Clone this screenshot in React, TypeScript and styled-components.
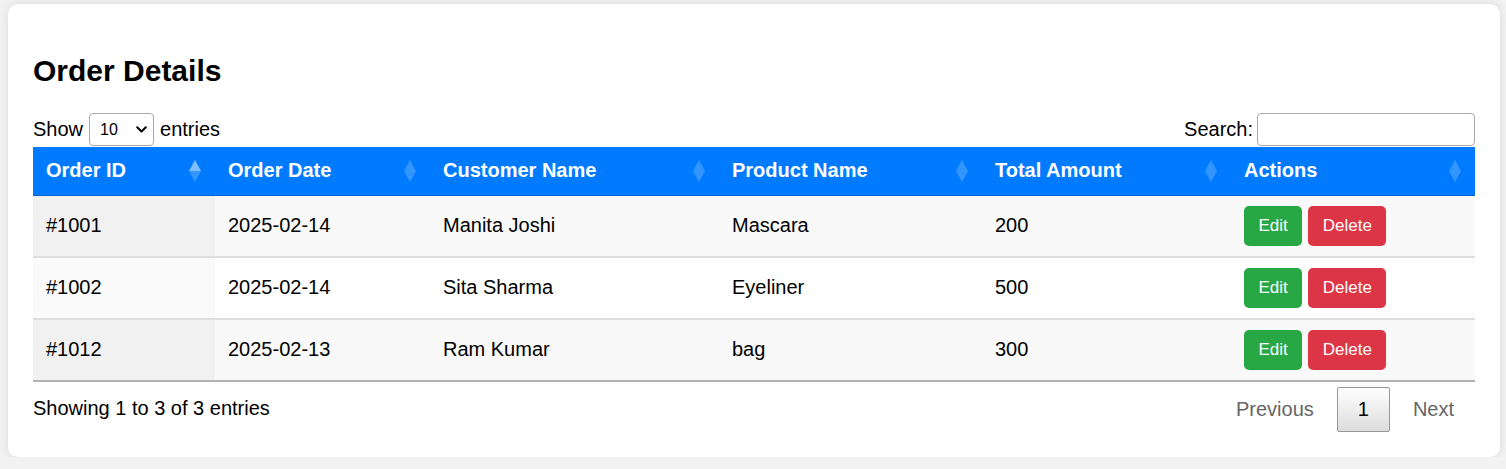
import React from "react";
import styled, { createGlobalStyle, css } from "styled-components";

const GlobalStyle = createGlobalStyle`
  html, body {
    margin: 0;
    padding: 0;
    background: #f2f2f2;
  }
  body {
    padding: 4px 6px 0 8px;
    font-family: "Liberation Sans", Arial, sans-serif;
    font-size: 20px;
    color: #000;
  }
`;

interface Order {
  id: string;
  date: string;
  customer: string;
  product: string;
  amount: number;
}

const orders: Order[] = [
  { id: "#1001", date: "2025-02-14", customer: "Manita Joshi", product: "Mascara", amount: 200 },
  { id: "#1002", date: "2025-02-14", customer: "Sita Sharma", product: "Eyeliner", amount: 500 },
  { id: "#1012", date: "2025-02-13", customer: "Ram Kumar", product: "bag", amount: 300 },
];

const columns = [
  { label: "Order ID", width: 182 },
  { label: "Order Date", width: 215 },
  { label: "Customer Name", width: 289 },
  { label: "Product Name", width: 263 },
  { label: "Total Amount", width: 249 },
  { label: "Actions", width: 244 },
];

export default function App() {
  return (
    <>
      <GlobalStyle />
      <Card>
        <Title>Order Details</Title>

        <Toolbar>
          <Length>
            Show
            <SelectWrap>
              <Select defaultValue="10">
                <option value="10">10</option>
                <option value="25">25</option>
                <option value="50">50</option>
                <option value="100">100</option>
              </Select>
              <Chevron width="11" height="7" viewBox="0 0 11 7">
                <path d="M1.2 1.2l4.3 4.3 4.3-4.3" fill="none" stroke="#000" strokeWidth="2" strokeLinecap="round" strokeLinejoin="round" />
              </Chevron>
            </SelectWrap>
            entries
          </Length>
          <SearchLabel>
            Search:<SearchInput type="search" />
          </SearchLabel>
        </Toolbar>

        <Table>
          <colgroup>
            {columns.map((c) => (
              <col key={c.label} style={{ width: c.width }} />
            ))}
          </colgroup>
          <thead>
            <tr>
              {columns.map((c, i) => (
                <HeaderCell key={c.label} $active={i === 0}>
                  {c.label}
                </HeaderCell>
              ))}
            </tr>
          </thead>
          <tbody>
            {orders.map((o, index) => (
              <Row key={o.id} $odd={index % 2 === 0} $first={index === 0}>
                <Cell>{o.id}</Cell>
                <Cell>{o.date}</Cell>
                <Cell>{o.customer}</Cell>
                <Cell>{o.product}</Cell>
                <Cell>{o.amount}</Cell>
                <Cell>
                  <ActionButton $variant="edit">Edit</ActionButton>
                  <ActionButton $variant="delete">Delete</ActionButton>
                </Cell>
              </Row>
            ))}
          </tbody>
        </Table>

        <Footer>
          <Info>Showing 1 to 3 of 3 entries</Info>
          <Pagination>
            <PageButton $disabled>Previous</PageButton>
            <PageButton $current>1</PageButton>
            <PageButton $disabled>Next</PageButton>
          </Pagination>
        </Footer>
      </Card>
    </>
  );
}

const Card = styled.div`
  background: #fff;
  border-radius: 10px;
  box-shadow: 0 0 10px rgba(0, 0, 0, 0.1);
  padding: 25px;
`;

const Title = styled.h2`
  margin: 25px 0 25px;
  font-size: 30px;
  font-weight: bold;
  line-height: normal;
`;

const Toolbar = styled.div`
  display: flex;
  justify-content: space-between;
  align-items: flex-start;
  height: 34px;
`;

const Length = styled.label`
  display: flex;
  align-items: center;
  height: 33px;
`;

const SelectWrap = styled.span`
  position: relative;
  display: inline-block;
  height: 33px;
  margin: 0 6px;
`;

const Select = styled.select`
  appearance: none;
  width: 65px;
  height: 33px;
  box-sizing: border-box;
  padding: 0 0 0 10px;
  border: 1px solid #aaa;
  border-radius: 4px;
  background: #fff;
  font-family: "Liberation Sans", Arial, sans-serif;
  font-size: 16px;
  color: #000;
`;

const Chevron = styled.svg`
  position: absolute;
  right: 7px;
  top: 13px;
  pointer-events: none;
`;

const SearchLabel = styled.label`
  display: flex;
  align-items: center;
  height: 33px;
`;

const SearchInput = styled.input`
  width: 218px;
  height: 33px;
  box-sizing: border-box;
  margin-left: 4px;
  padding: 5px;
  border: 1px solid #aaa;
  border-radius: 4px;
  background: #fff;
  font-family: "Liberation Sans", Arial, sans-serif;
  font-size: 16px;
`;

const Table = styled.table`
  width: 100%;
  table-layout: fixed;
  border-collapse: collapse;
  border-bottom: 2px solid #b3b3b3;
`;

const triangle = css`
  content: "";
  position: absolute;
  right: 14px;
  width: 0;
  height: 0;
  border-left: 6px solid transparent;
  border-right: 6px solid transparent;
`;

const HeaderCell = styled.th<{ $active?: boolean }>`
  position: relative;
  height: 48px;
  box-sizing: border-box;
  padding: 12px 22px 12px 13px;
  background: #007bff;
  color: #fff;
  font-weight: bold;
  font-size: 20px;
  text-align: left;
  border-bottom: 1px solid #0062cc;

  &::before {
    ${triangle};
    top: 13px;
    border-bottom: 11px solid rgba(255, 255, 255, ${(p) => (p.$active ? 0.5 : 0.2)});
  }

  &::after {
    ${triangle};
    top: 24px;
    border-top: 11px solid rgba(255, 255, 255, 0.2);
  }
`;

const Row = styled.tr<{ $odd: boolean; $first: boolean }>`
  background: ${(p) => (p.$odd ? "#f9f9f9" : "#fff")};
  border-top: ${(p) => (p.$first ? "none" : "2px solid #ddd")};

  td:first-child {
    background: ${(p) => (p.$odd ? "#f1f1f1" : "#fafafa")};
  }
`;

const Cell = styled.td`
  height: 40px;
  padding: 10px 12px 10px 13px;
  font-size: 20px;
  vertical-align: middle;
  white-space: nowrap;
`;

const ActionButton = styled.button<{ $variant: "edit" | "delete" }>`
  height: 40px;
  padding: 0 14.5px;
  margin-right: 6px;
  border: none;
  border-radius: 5px;
  background: ${(p) => (p.$variant === "edit" ? "#28a745" : "#dc3545")};
  color: #fff;
  font-family: "Liberation Sans", Arial, sans-serif;
  font-size: 17px;
  cursor: pointer;
  vertical-align: middle;
`;

const Footer = styled.div`
  display: flex;
  justify-content: space-between;
  align-items: flex-start;
`;

const Info = styled.div`
  padding-top: 15px;
  line-height: 23px;
`;

const Pagination = styled.div`
  display: flex;
  padding-top: 5px;
`;

const PageButton = styled.span<{ $current?: boolean; $disabled?: boolean }>`
  display: inline-block;
  margin-left: 2px;
  padding: 10px 20px;
  line-height: 23px;
  border-radius: 2px;
  border: 1px solid transparent;
  color: ${(p) => (p.$disabled ? "#666" : "#333")};
  cursor: ${(p) => (p.$disabled ? "default" : "pointer")};
  ${(p) =>
    p.$current &&
    css`
      color: #000;
      border: 1px solid #979797;
      background: linear-gradient(to bottom, #fff 0%, #dcdcdc 100%);
    `}
`;
